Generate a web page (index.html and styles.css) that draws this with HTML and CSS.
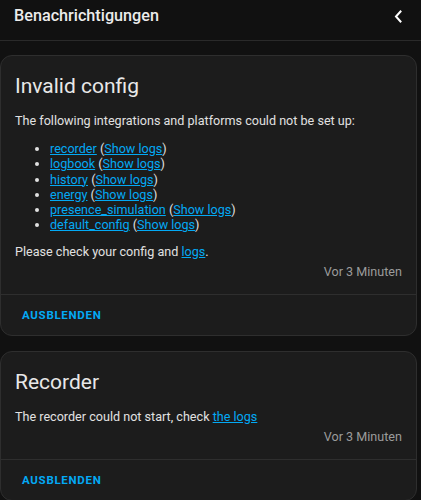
FILE: index.html
```html
<!DOCTYPE html>
<html lang="de">
<head>
<meta charset="utf-8">
<link rel="stylesheet" href="styles.css">
</head>
<body>
<header class="topbar">
  <div class="topbar-title">Benachrichtigungen</div>
  <svg class="back" width="10" height="13" viewBox="0 0 10 13"><path d="M7.5 1.5 L3 6.5 L7.5 11.5" fill="none" stroke="#ffffff" stroke-width="2" stroke-linecap="square"/></svg>
</header>
<main class="list">
  <section class="card">
    <h2 class="card-title">Invalid config</h2>
    <div class="card-body">
      <p class="para">The following integrations and platforms could not be set up:</p>
      <ul class="items">
        <li><a href="#">recorder</a> (<a href="#">Show logs</a>)</li>
        <li><a href="#">logbook</a> (<a href="#">Show logs</a>)</li>
        <li><a href="#">history</a> (<a href="#">Show logs</a>)</li>
        <li><a href="#">energy</a> (<a href="#">Show logs</a>)</li>
        <li><a href="#">presence_simulation</a> (<a href="#">Show logs</a>)</li>
        <li><a href="#">default_config</a> (<a href="#">Show logs</a>)</li>
      </ul>
      <p class="para para-end">Please check your config and <a href="#">logs</a>.</p>
      <div class="time">Vor 3 Minuten</div>
    </div>
    <div class="actions"><button class="btn">Ausblenden</button></div>
  </section>
  <section class="card">
    <h2 class="card-title">Recorder</h2>
    <div class="card-body">
      <p class="para">The recorder could not start, check <a href="#">the logs</a></p>
      <div class="time">Vor 3 Minuten</div>
    </div>
    <div class="actions"><button class="btn">Ausblenden</button></div>
  </section>
</main>
</body>
</html>
```
FILE: styles.css
```css
* { box-sizing: border-box; }
html, body {
  margin: 0;
  padding: 0;
  background: #111111;
  color: #e1e1e1;
  font-family: Roboto, "Noto Sans", sans-serif;
  font-size: 12.6px;
  overflow: hidden;
}
.topbar {
  height: 41px;
  border-bottom: 1px solid #2a2a2a;
  display: flex;
  align-items: flex-start;
  justify-content: space-between;
  padding: 6px 18px 0 14px;
}
.topbar-title {
  font-size: 16.2px;
  line-height: 20px;
  font-weight: 500;
  color: #ececec;
}
.back { display: block; margin-top: 4px; }
.list {
  display: flex;
  flex-direction: column;
  gap: 15px;
  padding: 14px 4px 0 0;
}
.card {
  background: #1c1c1c;
  border: 1px solid #2e2e2e;
  border-radius: 12px;
}
.card-title {
  margin: 0;
  padding: 16px 14px 0;
  font-size: 21px;
  font-weight: 400;
  line-height: 28px;
  color: #e8e8e8;
}
.card-body {
  padding: 11px 14px 12px;
}
.para {
  margin: 0;
  line-height: 20px;
}
.para-end { margin-top: 9px; }
.items {
  margin: 10px 0 0;
  padding-left: 35px;
  line-height: 15.3px;
}
a {
  color: #03a9f4;
  text-decoration: underline;
}
.time {
  text-align: right;
  color: #9b9b9b;
  line-height: 20px;
}
.actions {
  border-top: 1px solid #2e2e2e;
  height: 41px;
  display: flex;
  align-items: center;
  padding: 0 0 0 21px;
}
.btn {
  background: none;
  border: none;
  padding: 0;
  color: #03a9f4;
  font-family: Roboto, sans-serif;
  font-size: 11.5px;
  font-weight: 700;
  letter-spacing: 0.7px;
  text-transform: uppercase;
}
```
